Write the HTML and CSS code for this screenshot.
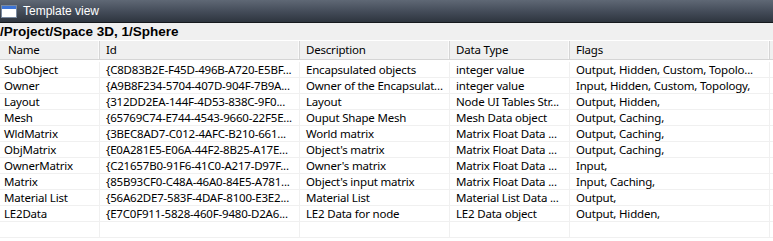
FILE: index.html
```html
<!DOCTYPE html>
<html lang="en">
<head>
    <meta charset="UTF-8">
    <title>Template view</title>
    <link rel="stylesheet" href="styles.css">
</head>
<body>
    <div class="titlebar">
        <svg class="win-icon" width="16" height="13" viewBox="0 0 16 13">
            <rect x="0.5" y="0.5" width="15" height="12" fill="#ffffff" stroke="#7a8aa0"/>
            <rect x="1" y="1" width="14" height="3" fill="#3d74d6"/>
        </svg>
        <span class="title">Template view</span>
    </div>

    <div class="path">/Project/Space 3D, 1/Sphere</div>

    <div class="list">
        <div class="row head">
            <div class="cell">Name</div>
            <div class="cell">Id</div>
            <div class="cell">Description</div>
            <div class="cell">Data Type</div>
            <div class="cell">Flags</div>
            <div class="cell"></div>
        </div>

        <div class="rows">
            <div class="row">
                <div class="cell">SubObject</div>
                <div class="cell">{C8D83B2E-F45D-496B-A720-E5BF...</div>
                <div class="cell">Encapsulated objects</div>
                <div class="cell">integer value</div>
                <div class="cell">Output, Hidden, Custom, Topolo...</div>
                <div class="cell"></div>
            </div>
            <div class="row">
                <div class="cell">Owner</div>
                <div class="cell">{A9B8F234-5704-407D-904F-7B9A...</div>
                <div class="cell">Owner of the Encapsulat...</div>
                <div class="cell">integer value</div>
                <div class="cell">Input, Hidden, Custom, Topology,</div>
                <div class="cell"></div>
            </div>
            <div class="row">
                <div class="cell">Layout</div>
                <div class="cell">{312DD2EA-144F-4D53-838C-9F0...</div>
                <div class="cell">Layout</div>
                <div class="cell">Node UI Tables Str...</div>
                <div class="cell">Output, Hidden,</div>
                <div class="cell"></div>
            </div>
            <div class="row">
                <div class="cell">Mesh</div>
                <div class="cell">{65769C74-E744-4543-9660-22F5E...</div>
                <div class="cell">Ouput Shape Mesh</div>
                <div class="cell">Mesh Data object</div>
                <div class="cell">Output, Caching,</div>
                <div class="cell"></div>
            </div>
            <div class="row">
                <div class="cell">WldMatrix</div>
                <div class="cell">{3BEC8AD7-C012-4AFC-B210-661...</div>
                <div class="cell">World matrix</div>
                <div class="cell">Matrix Float Data ...</div>
                <div class="cell">Output, Caching,</div>
                <div class="cell"></div>
            </div>
            <div class="row">
                <div class="cell">ObjMatrix</div>
                <div class="cell">{E0A281E5-E06A-44F2-8B25-A17E...</div>
                <div class="cell">Object's matrix</div>
                <div class="cell">Matrix Float Data ...</div>
                <div class="cell">Output, Caching,</div>
                <div class="cell"></div>
            </div>
            <div class="row">
                <div class="cell">OwnerMatrix</div>
                <div class="cell">{C21657B0-91F6-41C0-A217-D97F...</div>
                <div class="cell">Owner's matrix</div>
                <div class="cell">Matrix Float Data ...</div>
                <div class="cell">Input,</div>
                <div class="cell"></div>
            </div>
            <div class="row">
                <div class="cell">Matrix</div>
                <div class="cell">{85B93CF0-C48A-46A0-84E5-A781...</div>
                <div class="cell">Object's input matrix</div>
                <div class="cell">Matrix Float Data ...</div>
                <div class="cell">Input, Caching,</div>
                <div class="cell"></div>
            </div>
            <div class="row">
                <div class="cell">Material List</div>
                <div class="cell">{56A62DE7-583F-4DAF-8100-E3E2...</div>
                <div class="cell">Material List</div>
                <div class="cell">Material List Data ...</div>
                <div class="cell">Output,</div>
                <div class="cell"></div>
            </div>
            <div class="row">
                <div class="cell">LE2Data</div>
                <div class="cell">{E7C0F911-5828-460F-9480-D2A6...</div>
                <div class="cell">LE2 Data for node</div>
                <div class="cell">LE2 Data object</div>
                <div class="cell">Output, Hidden,</div>
                <div class="cell"></div>
            </div>
            <div class="row">
                <div class="cell"></div><div class="cell"></div><div class="cell"></div>
                <div class="cell"></div><div class="cell"></div><div class="cell"></div>
            </div>
        </div>
    </div>
</body>
</html>
```

FILE: styles.css
```css
body {
    margin: 0;
    width: 773px;
    height: 241px;
    overflow: hidden;
    background-color: #ffffff;
    font-family: 'Noto Sans', 'Open Sans', sans-serif;
    font-size: 11.5px;
    letter-spacing: -0.2px;
    color: #000;
}

/* Barre de titre */
.titlebar {
    height: 22px;
    display: flex;
    align-items: center;
    gap: 6px;
    padding-left: 1px;
    background: linear-gradient(to bottom, #5f6875 0%, #454d5a 50%, #2e353f 100%);
    border-bottom: 1px solid #16191e;
}

.win-icon {
    flex: none;
    margin-top: 1px;
}

.title {
    color: #ffffff;
    font-family: 'Liberation Sans', sans-serif;
    font-size: 12px;
    letter-spacing: 0;
}

.path {
    height: 17px;
    line-height: 17px;
    background-color: #f0f0f0;
    font-family: 'Liberation Sans', sans-serif;
    font-weight: bold;
    font-size: 13.5px;
    letter-spacing: 0;
    white-space: nowrap;
}

.list {
    background-color: #fff;
}

.row {
    display: grid;
    grid-template-columns: 100px 200px 150px 120px 200px 1fr;
    height: 15px;
    border-bottom: 1px solid #f0f0f0;
}

.cell {
    padding-left: 6px;
    line-height: 15px;
    white-space: nowrap;
    overflow: hidden;
    border-right: 1px solid #f0f0f0;
}

.cell:first-child {
    padding-left: 4px;
}

.cell:last-child {
    border-right: none;
}

/* Entête des colonnes */
.row.head {
    height: 18px;
    background-color: #f0f0f0;
    border-top: 1px solid #ffffff;
    border-bottom: 1px solid #d5d5d5;
}

.row.head .cell {
    line-height: 18px;
    border-right: 1px solid #d5d5d5;
    box-shadow: inset -1px 0 0 #fafafa;
}

.row.head .cell:first-child {
    padding-left: 8px;
}

.rows {
    padding-top: 2px;
}
```
